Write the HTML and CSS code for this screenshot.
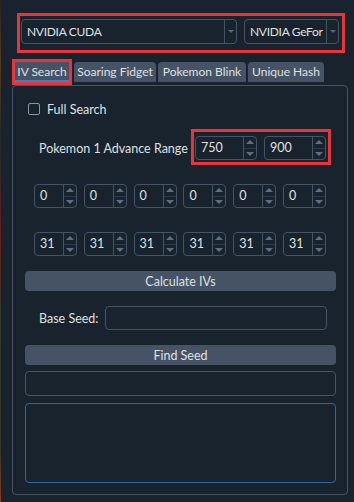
FILE: index.html
```html
<!DOCTYPE html>
<html>
<head>
    <title>Seed Finder</title>
    <meta charset="UTF-8" />
    <link rel="stylesheet" href="styles.css">
</head>
<body>
    <div class="devices mark">
        <div class="combo wide"><span class="combo-text">NVIDIA CUDA</span><span class="combo-arrow"></span></div>
        <div class="combo narrow"><span class="combo-text">NVIDIA GeFor</span><span class="combo-arrow"></span></div>
    </div>

    <div class="tabs">
        <div class="tab tab-iv selected mark">IV Search</div>
        <div class="tab tab-fidget">Soaring Fidget</div>
        <div class="tab tab-blink">Pokemon Blink</div>
        <div class="tab tab-hash">Unique Hash</div>
    </div>

    <div class="pane">
        <div class="check-row">
            <span class="checkbox"></span>
            <span>Full Search</span>
        </div>

        <div class="range-row">
            <span class="label">Pokemon 1 Advance Range</span>
            <div class="range mark">
                <div class="spin range-spin"><span class="spin-value">750</span><span class="spin-buttons"><i class="up"></i><i class="down"></i></span></div>
                <div class="spin range-spin"><span class="spin-value">900</span><span class="spin-buttons"><i class="up"></i><i class="down"></i></span></div>
            </div>
        </div>

        <div class="iv-row" id="minIvs"></div>
        <div class="iv-row" id="maxIvs"></div>

        <button class="action calc">Calculate IVs</button>

        <div class="seed-row">
            <span class="label">Base Seed:</span>
            <div class="line-edit seed-input"></div>
        </div>

        <button class="action find">Find Seed</button>

        <div class="line-edit result"></div>
        <div class="text-box"></div>
    </div>

    <script>
        function fillIvs(id, value) {
            const row = document.getElementById(id);
            for (let i = 0; i < 6; i++) {
                const spin = document.createElement("div");
                spin.className = "spin iv-spin";
                spin.innerHTML = '<span class="spin-value">' + value + '</span>' +
                    '<span class="spin-buttons"><i class="up"></i><i class="down"></i></span>';
                row.appendChild(spin);
            }
        }

        fillIvs("minIvs", 0);
        fillIvs("maxIvs", 31);
    </script>
</body>
</html>
```

FILE: styles.css
```css
body {
    margin: 0;
    width: 354px;
    height: 502px;
    overflow: hidden;
    font-family: Lato, "Noto Sans", sans-serif;
    font-size: 12.5px;
    color: #dfe1e2;
    background: linear-gradient(180deg, #2a1f22 0%, #5a3a1c 12%, #1f2a30 28%, #6e1c18 48%, #3a3a22 62%, #3b3520 90%, #8a3c18 100%) left top / 1px 100% no-repeat, #19232d;
}

/* red annotation boxes drawn over the widgets */
.mark {
    position: relative;
}

.mark::after {
    content: "";
    position: absolute;
    border: 3px solid #e8353c;
    pointer-events: none;
}

.devices {
    display: flex;
    gap: 7px;
    width: 322px;
    box-sizing: border-box;
    margin: 16px 0 0 20px;
    padding: 3px 3px 6px 1px;
}

.devices::after {
    inset: -3px;
}

.combo {
    display: flex;
    height: 25px;
    box-sizing: border-box;
    border: 1px solid #455364;
    border-radius: 4px;
    overflow: hidden;
    font-size: 12px;
    letter-spacing: -0.3px;
}

.combo.wide {
    width: 216px;
}

.combo.narrow {
    width: 95px;
}

.combo-text {
    flex: 1;
    padding-left: 5px;
    line-height: 23px;
    white-space: nowrap;
    overflow: hidden;
}

.combo-arrow {
    width: 11px;
    border-left: 1px solid #455364;
    position: relative;
}

.combo-arrow::before {
    content: "";
    position: absolute;
    left: 3px;
    top: 10px;
    border-left: 3px solid transparent;
    border-right: 3px solid transparent;
    border-top: 3px solid #56657a;
}

.tabs {
    display: flex;
    gap: 2px;
    margin: 10px 0 0 12px;
    height: 23px;
    align-items: flex-end;
    font-size: 12px;
}

.tab {
    height: 20px;
    box-sizing: border-box;
    margin-bottom: 1px;
    background: #455364;
    border-radius: 4px 4px 0 0;
    line-height: 20px;
    text-align: center;
    white-space: nowrap;
    overflow: hidden;
}

.tab-iv {
    width: 60px;
}

.tab-fidget {
    width: 82px;
}

.tab-blink {
    width: 88px;
}

.tab-hash {
    width: 76px;
}

.tab.selected {
    overflow: visible;
    box-shadow: inset 0 -2px 0 #2f86c4;
}

.tab.selected::after {
    inset: -3px 0 -3px 0;
}

.pane {
    margin: 2px 6px 0 12px;
    height: 410px;
    box-sizing: border-box;
    border: 1px solid #455364;
    border-radius: 4px;
    padding: 0 11px 0 12px;
}

.check-row {
    display: flex;
    align-items: center;
    gap: 7px;
    margin-top: 16px;
    padding-left: 3px;
    height: 14px;
}

.checkbox {
    width: 12px;
    height: 12px;
    box-sizing: border-box;
    border: 1px solid #8794a3;
    border-radius: 2px;
}

.range-row {
    display: flex;
    align-items: center;
    margin-top: 20px;
    padding: 0 10px 0 14px;
}

.range {
    display: flex;
    gap: 7px;
    margin-left: auto;
}

.range::after {
    inset: -7px -5px -5px -4px;
}

.spin {
    display: flex;
    height: 24px;
    box-sizing: border-box;
    border: 1px solid #455364;
    border-radius: 4px;
}

.range-spin {
    width: 62px;
}

.iv-spin {
    width: 43px;
}

.spin-value {
    flex: 1;
    padding-left: 5px;
    line-height: 22px;
}

.spin-buttons {
    width: 12px;
    border-left: 1px solid #455364;
    display: flex;
    flex-direction: column;
}

.spin-buttons i {
    flex: 1;
    position: relative;
}

.spin-buttons i::before {
    content: "";
    position: absolute;
    left: 2px;
    border-left: 4px solid transparent;
    border-right: 4px solid transparent;
}

.spin-buttons .up {
    border-bottom: 1px solid #2c3a48;
}

.spin-buttons .up::before {
    top: 3px;
    border-bottom: 4px solid #5f6e80;
}

.spin-buttons .down::before {
    top: 3px;
    border-top: 4px solid #5f6e80;
}

.iv-row {
    display: flex;
    justify-content: space-between;
    padding: 0 10px 0 9px;
}

#minIvs {
    margin-top: 24px;
}

#maxIvs {
    margin-top: 24px;
}

.action {
    display: block;
    width: 100%;
    height: 20px;
    margin: 0;
    padding: 0;
    border: none;
    border-radius: 4px;
    background: #455364;
    color: #dfe1e2;
    font-family: inherit;
    font-size: 12.5px;
}

.calc {
    margin-top: 15px;
}

.seed-row {
    display: flex;
    align-items: center;
    margin-top: 15px;
    padding: 0 9px 0 14px;
}

.line-edit {
    height: 24px;
    box-sizing: border-box;
    border: 1px solid #455364;
    border-radius: 4px;
}

.seed-input {
    width: 222px;
    margin-left: auto;
}

.find {
    margin-top: 15px;
}

.result {
    margin-top: 6px;
    height: 25px;
}

.text-box {
    margin-top: 7px;
    height: 80px;
    box-sizing: border-box;
    border: 1px solid #2a6aa3;
    border-radius: 4px;
}
```
